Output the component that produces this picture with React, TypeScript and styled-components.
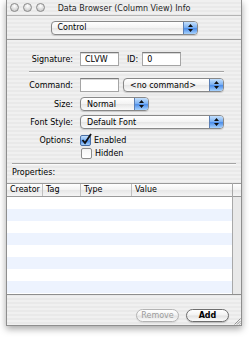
import React from "react";
import styled, { createGlobalStyle } from "styled-components";

const GlobalStyle = createGlobalStyle`
  html, body {
    margin: 0;
    padding: 0;
    background: #ffffff;
  }
  body {
    font-family: "DejaVu Sans", "Liberation Sans", sans-serif;
    font-size: 8px;
    color: #000;
  }
`;

const pinstripe = `repeating-linear-gradient(to bottom, #f0f0f0 0px, #f0f0f0 2px, #e9e9e9 2px, #e9e9e9 4px)`;

const Page = styled.div`
  padding-left: 6px;
  height: 339px;
`;

const Window = styled.div`
  width: 236px;
  height: 326px;
  box-sizing: border-box;
  border: 1px solid #8e8e8e;
  border-top: none;
  background: ${pinstripe};
  box-shadow: 0 3px 7px rgba(0, 0, 0, 0.35);
  display: flex;
  flex-direction: column;
  overflow: hidden;
`;

const TitleBar = styled.div`
  height: 15px;
  display: grid;
  grid-template-columns: 1fr auto 1fr;
  align-items: center;
  border-bottom: 1px solid #b4b4b4;
`;

const Lights = styled.div`
  display: flex;
  gap: 4px;
  padding-left: 3px;
`;

const Light = styled.span`
  width: 9px;
  height: 9px;
  box-sizing: border-box;
  border-radius: 50%;
  border: 1px solid #8a8a8a;
  background: radial-gradient(circle at 50% 30%, #ffffff 0%, #e2e2e2 45%, #bdbdbd 100%);
`;

const Title = styled.div`
  color: #1e1e1e;
  white-space: nowrap;
  padding-top: 1px;
`;

const Toolbar = styled.div`
  height: 23px;
  display: flex;
  align-items: center;
  justify-content: center;
  border-bottom: 1px solid #9c9c9c;
`;

const Body = styled.div`
  flex: 1;
  display: flex;
  flex-direction: column;
  padding-top: 12px;
`;

const Row = styled.div<{ $top: number; $h?: number }>`
  display: flex;
  align-items: center;
  margin-top: ${(p) => p.$top}px;
  height: ${(p) => p.$h ?? 14}px;
`;

const Label = styled.div`
  width: 66px;
  text-align: right;
  margin-right: 7px;
  flex-shrink: 0;
  white-space: nowrap;
`;

const TextField = styled.div<{ $w: number }>`
  width: ${(p) => p.$w}px;
  height: 14px;
  box-sizing: border-box;
  background: #fff;
  border: 1px solid #a5a5a5;
  border-top-color: #7c7c7c;
  padding-left: 4px;
  display: flex;
  align-items: center;
  box-shadow: inset 0 1px 0 #d8d8d8;
`;

const InlineLabel = styled.span`
  margin: 0 4px 0 8px;
`;

const PopupBox = styled.div<{ $w: number; $gap?: number }>`
  width: ${(p) => p.$w}px;
  height: 14px;
  box-sizing: border-box;
  margin-left: ${(p) => p.$gap ?? 0}px;
  border: 1px solid #888;
  border-radius: 4px;
  background: linear-gradient(#ffffff, #f3f3f3 48%, #e6e6e6 52%, #fbfbfb);
  display: flex;
  align-items: center;
  padding-left: 6px;
  overflow: hidden;
  box-shadow: 0 1px 1px rgba(0, 0, 0, 0.15);
`;

const PopupText = styled.span`
  flex: 1;
  white-space: nowrap;
`;

const PopupArrows = styled.span`
  width: 13px;
  height: 100%;
  flex-shrink: 0;
  display: flex;
  align-items: center;
  justify-content: center;
  border-left: 1px solid #5b7fb4;
  background: linear-gradient(#c4e0fd, #7fb3f3 45%, #4d8eea 55%, #a9d3fd);
`;

const Popup = ({ w, gap, children }: { w: number; gap?: number; children: React.ReactNode }) => (
  <PopupBox $w={w} $gap={gap}>
    <PopupText>{children}</PopupText>
    <PopupArrows>
      <svg width="5" height="8" viewBox="0 0 5 8">
        <path d="M2.5 0 L5 3 L0 3 Z M2.5 8 L5 5 L0 5 Z" fill="#111" />
      </svg>
    </PopupArrows>
  </PopupBox>
);

const Separator = styled.div<{ $left: number; $right: number; $top: number }>`
  height: 1px;
  margin: ${(p) => p.$top}px ${(p) => p.$right}px 0 ${(p) => p.$left}px;
  background: #a4a4a4;
  border-bottom: 1px solid #fafafa;
`;

const CheckRow = styled.div<{ $top: number }>`
  display: flex;
  align-items: center;
  height: 12px;
  margin-top: ${(p) => p.$top}px;
  padding-left: 74px;
`;

const CheckBox = styled.span<{ $on: boolean }>`
  position: relative;
  width: 11px;
  height: 11px;
  box-sizing: border-box;
  border-radius: 2px;
  border: 1px solid ${(p) => (p.$on ? "#4a6fa5" : "#8c8c8c")};
  background: ${(p) =>
    p.$on
      ? "linear-gradient(#c4e0fd, #7fb3f3 45%, #4d8eea 55%, #a9d3fd)"
      : "linear-gradient(#f4f4f4, #ffffff)"};
  margin-right: 3px;
  flex-shrink: 0;
`;

const CheckMark = styled.svg`
  position: absolute;
  left: 0;
  top: -3px;
`;

const Tick = () => (
  <CheckMark width="12" height="12" viewBox="0 0 12 12">
    <path d="M1.5 7 L4 10 L10 1" stroke="#111" strokeWidth="1.8" fill="none" />
  </CheckMark>
);

const SectionLabel = styled.div`
  margin: 3px 0 0 5px;
  height: 10px;
  line-height: 10px;
`;

const TableView = styled.div`
  margin-top: 5px;
  display: flex;
  border-bottom: 1px solid #8e8e8e;
`;

const TableMain = styled.div`
  flex: 1;
  display: flex;
  flex-direction: column;
`;

const headerBg = `linear-gradient(#ffffff, #f2f2f2 50%, #e7e7e7 51%, #f5f5f5)`;

const HeaderRow = styled.div`
  height: 12px;
  display: grid;
  grid-template-columns: 36px 38px 51px 1fr;
  border-top: 1px solid #9a9a9a;
  border-bottom: 1px solid #9a9a9a;
  background: ${headerBg};
`;

const HeaderCell = styled.div`
  padding-left: 3px;
  line-height: 12px;
  border-right: 1px solid #c0c0c0;
  white-space: nowrap;
  overflow: hidden;
  &:last-child {
    border-right: none;
  }
`;

const Rows = styled.div`
  height: 97px;
  overflow: hidden;
  background: #fff;
`;

const DataRow = styled.div<{ $alt: boolean }>`
  height: 12px;
  background: ${(p) => (p.$alt ? "#edf3fe" : "#ffffff")};
`;

const Scroller = styled.div`
  width: 8px;
  display: flex;
  flex-direction: column;
  border-left: 1px solid #a8a8a8;
  background: #e9e9e9;
`;

const ScrollerCorner = styled.div`
  height: 12px;
  border-top: 1px solid #9a9a9a;
  border-bottom: 1px solid #9a9a9a;
  background: ${headerBg};
`;

const BottomBar = styled.div`
  flex: 1;
  position: relative;
  display: flex;
  justify-content: flex-end;
  align-items: flex-end;
  gap: 7px;
  padding: 0 12px 3px 0;
`;

const Button = styled.div<{ $disabled?: boolean }>`
  width: 43px;
  height: 13px;
  box-sizing: border-box;
  border-radius: 7px;
  border: 1px solid ${(p) => (p.$disabled ? "#b4b4b4" : "#6e6e6e")};
  background: linear-gradient(#ffffff, #f2f2f2 48%, #e2e2e2 52%, #fbfbfb);
  color: ${(p) => (p.$disabled ? "#9c9c9c" : "#000")};
  font-weight: ${(p) => (p.$disabled ? "normal" : "bold")};
  display: flex;
  align-items: center;
  justify-content: center;
  box-shadow: 0 1px 1px rgba(0, 0, 0, ${(p) => (p.$disabled ? 0.08 : 0.2)});
`;

const Grip = styled.svg`
  position: absolute;
  right: 0;
  bottom: 0;
`;

export default function App() {
  return (
    <Page>
      <GlobalStyle />
      <Window>
        <TitleBar>
          <Lights>
            <Light />
            <Light />
            <Light />
          </Lights>
          <Title>Data Browser (Column View) Info</Title>
          <div />
        </TitleBar>
        <Toolbar>
          <Popup w={147}>Control</Popup>
        </Toolbar>
        <Body>
          <Row $top={0}>
            <Label>Signature:</Label>
            <TextField $w={39}>CLVW</TextField>
            <InlineLabel>ID:</InlineLabel>
            <TextField $w={39}>0</TextField>
          </Row>
          <Separator $left={22} $right={17} $top={5} />
          <Row $top={5}>
            <Label>Command:</Label>
            <TextField $w={39} />
            <Popup w={101} gap={4}>
              &lt;no command&gt;
            </Popup>
          </Row>
          <Row $top={5}>
            <Label>Size:</Label>
            <Popup w={69}>Normal</Popup>
          </Row>
          <Row $top={4}>
            <Label>Font Style:</Label>
            <Popup w={144}>Default Font</Popup>
          </Row>
          <Row $top={5} $h={12}>
            <Label>Options:</Label>
            <CheckBox $on={true}>
              <Tick />
            </CheckBox>
            Enabled
          </Row>
          <CheckRow $top={1}>
            <CheckBox $on={false} />
            Hidden
          </CheckRow>
          <Separator $left={5} $right={5} $top={4} />
          <SectionLabel>Properties:</SectionLabel>
          <TableView>
            <TableMain>
              <HeaderRow>
                <HeaderCell>Creator</HeaderCell>
                <HeaderCell>Tag</HeaderCell>
                <HeaderCell>Type</HeaderCell>
                <HeaderCell>Value</HeaderCell>
              </HeaderRow>
              <Rows>
                {Array.from({ length: 9 }).map((_, i) => (
                  <DataRow key={i} $alt={i % 2 === 1} />
                ))}
              </Rows>
            </TableMain>
            <Scroller>
              <ScrollerCorner />
            </Scroller>
          </TableView>
          <BottomBar>
            <Button $disabled>Remove</Button>
            <Button>Add</Button>
            <Grip width="8" height="8" viewBox="0 0 8 8">
              <path d="M7.5 1.5 L1.5 7.5 M7.5 4 L4 7.5 M7.5 6.5 L6.5 7.5" stroke="#8a8a8a" strokeWidth="0.9" />
            </Grip>
          </BottomBar>
        </Body>
      </Window>
    </Page>
  );
}
